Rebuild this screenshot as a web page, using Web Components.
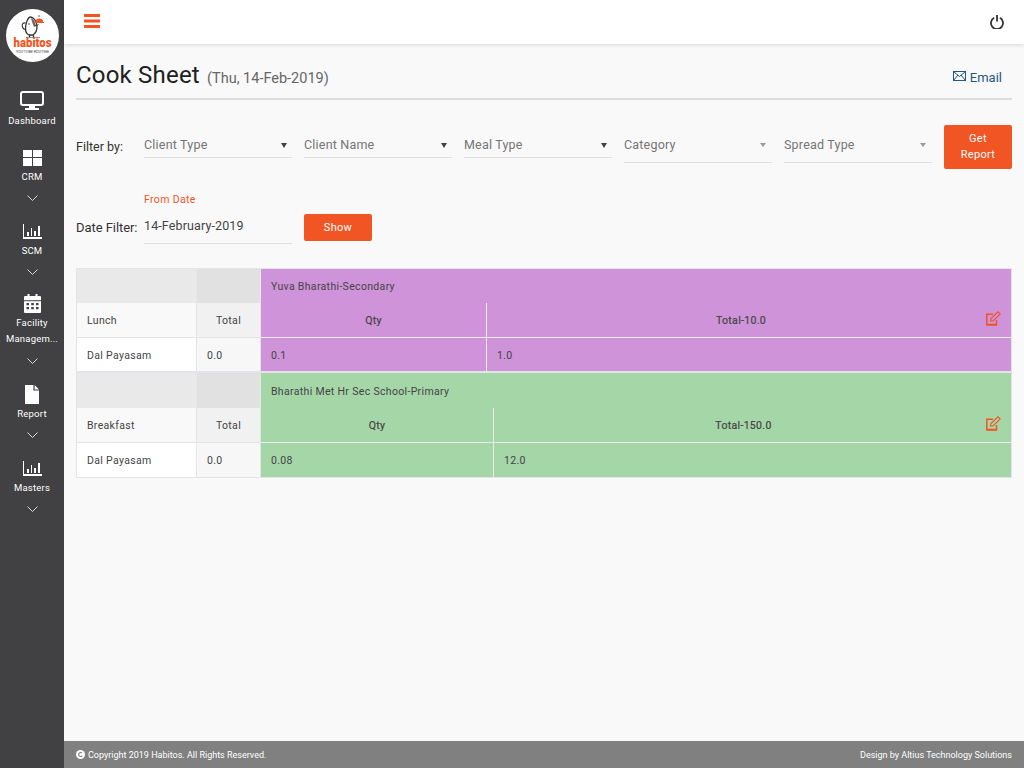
<!DOCTYPE html>
<html><head><meta charset="utf-8"><style>
html,body{margin:0;padding:0;height:100%}
body{font-family:Roboto,"Liberation Sans",sans-serif;background:#f9f9f9;color:#333}
app-shell{height:768px}
</style></head><body>
<app-shell>
<side-bar slot="side">
  <nav-item label="Dashboard" icon="monitor" top="28" gap="3"></nav-item>
  <nav-item label="CRM" icon="grid" more top="17" gap="3.25"></nav-item>
  <nav-item label="SCM" icon="chart" more top="18.25" gap="4.25"></nav-item>
  <nav-item label="Facility Managem..." icon="cal" more top="18.25" gap="2.25" chev="11.25"></nav-item>
  <nav-item label="Report" icon="file" more top="20.25" gap="2.25"></nav-item>
  <nav-item label="Masters" icon="chart" more top="18.25" gap="4.25"></nav-item>
</side-bar>
<top-bar slot="top"></top-bar>
<page-head></page-head>
<filter-row></filter-row>
<date-row></date-row>
<cook-group class="first" name="Yuva Bharathi-Secondary" color="#ce93d8" meal="Lunch" qtyw="226" pad="26" total="Total-10.0" item="Dal Payasam" qty="0.1" val="1.0"></cook-group>
<cook-group name="Bharathi Met Hr Sec School-Primary" color="#a5d6a7" meal="Breakfast" qtyw="233" pad="28" total="Total-150.0" item="Dal Payasam" qty="0.08" val="12.0"></cook-group>
</app-shell>
<script>
function def(name,html){
  customElements.define(name,class extends HTMLElement{
    connectedCallback(){
      if(this.shadowRoot)return;
      const r=this.attachShadow({mode:'open'});
      r.innerHTML=typeof html==='function'?html(this):html;
    }
  });
}
const icons={
monitor:`<svg width="24" height="19" viewBox="0 0 24 19" fill="none"><rect x="1" y="1" width="22" height="13" rx="2" stroke="#fff" stroke-width="2"/><rect x="9" y="14.500" width="6" height="2.500" fill="#fff"/><rect x="5" y="17" width="14" height="2" rx=".5" fill="#fff"/></svg>`,
grid:`<svg width="19" height="16" viewBox="0 0 19 16" fill="#fff"><rect width="9" height="7"/><rect x="10" width="9" height="7"/><rect y="8" width="9" height="8"/><rect x="10" y="8" width="9" height="8"/></svg>`,
chart:`<svg width="19" height="15" viewBox="0 0 19 15" fill="#fff"><rect x="0" y="0" width="1" height="15"/><rect x="0" y="13" width="19" height="2"/><rect x="4" y="8" width="2" height="4"/><rect x="8" y="4" width="1" height="8"/><rect x="11" y="7" width="2" height="5"/><rect x="15" y="2" width="2" height="10"/></svg>`,
cal:`<svg width="17" height="19" viewBox="0 0 17 19" fill="#fff"><path d="M3.500 0h2v2.500h-2zM11.500 0h2v2.500h-2z"/><path fill-rule="evenodd" d="M1 2h15a1 1 0 0 1 1 1v3.200H0V3a1 1 0 0 1 1-1zM0 7.200h17V18a1 1 0 0 1-1 1H1a1 1 0 0 1-1-1zM2.500 9v2.200H5V9zm4.700 0v2.200h2.600V9zm4.800 0v2.200h2.500V9zM2.500 13v2.200H5V13zm4.700 0v2.200h2.600V13zm4.800 0v2.200h2.500V13z"/></svg>`,
file:`<svg width="14" height="19" viewBox="0 0 14 19" fill="#fff"><path d="M0 0h8.400v5.400H14V19H0z"/><path d="M9.600 0L14 4.400H9.600z"/></svg>`};
const chev=`<svg width="11" height="6" viewBox="0 0 11 6" fill="none" stroke="#d8d8d8" stroke-width="1"><path d="M.5.500 5.500 5.500 10.500.500"/></svg>`;

def('app-shell',`<style>
:host{display:grid;grid-template-columns:64px 1fr;grid-template-rows:44px 1fr 27px;width:1024px;height:768px;overflow:hidden}
.side{grid-row:1/4;display:block}
.top{grid-column:2;position:relative;z-index:1}
main{grid-column:2;padding:0 12px;min-height:0;display:flex;flex-direction:column}
footer{grid-column:2;background:#808080;color:#fff;font-size:9px;display:flex;justify-content:space-between;align-items:center;padding:0 12px}
footer span{display:flex;align-items:center;gap:3px}
</style>
<div class="side"><slot name="side"></slot></div>
<div class="top"><slot name="top"></slot></div>
<main><slot></slot></main>
<footer><span><svg width="9" height="9" viewBox="0 0 10 10"><circle cx="5" cy="5" r="5" fill="#fff"/><path d="M6.800 3.600A2.200 2.200 0 1 0 6.800 6.400" fill="none" stroke="#808080" stroke-width="1.300"/></svg>Copyright 2019 Habitos. All Rights Reserved.</span><span>Design by Altius Technology Solutions</span></footer>`);

def('side-bar',`<style>
:host{display:flex;flex-direction:column;align-items:center;background:#414042;width:64px;height:768px}
.logo{width:53px;height:53px;border-radius:50%;background:#fff;margin-top:9px;display:block;flex:none}
.list{display:flex;flex-direction:column;width:100%;align-items:center}
text{font-family:Roboto,"Liberation Sans",sans-serif}
</style>
<svg class="logo" viewBox="0 0 53 53">
<path d="M24.500 8c2.500 0 6 3.500 6.500 9 .3 4-1.500 8-4.500 9h-3.500c-2.700-1-4-4.500-3.300-9 .4-3.500 2.300-9 4.800-9z" fill="#fff" stroke="#333" stroke-width="1.300"/>
<path d="M25 9c2.500 1 4.500 4.500 5 8l-2 1c-1-3-2.500-6-3-9z" fill="#666"/>
<circle cx="23" cy="15" r=".8" fill="#333"/>
<path d="M19.500 14c-2.500-.6-3.800 1-3.200 3.500s2.700 3.500 3.700 2.500" fill="none" stroke="#333" stroke-width="1.100"/>
<path d="M29 16.500c1.500.5 2.800 0 3.500-1.500" fill="none" stroke="#333" stroke-width=".8"/>
<path d="M23.500 26v2.300M27.500 26v2.300" stroke="#333" stroke-width="1.300"/>
<path d="M20 28.500h14" stroke="#666" stroke-width=".7"/>
<path d="M29.500 13a3.800 3.600 0 0 1 7.600 0z" fill="#f15524"/><path d="M28.500 13.500h9.500" stroke="#f15524" stroke-width="1"/><circle cx="33" cy="7" r="1" fill="#999"/>
<text x="26.500" y="38.200" text-anchor="middle" font-size="12" font-weight="900" fill="#f15524" textLength="38" lengthAdjust="spacingAndGlyphs">habitos</text>
<text x="26.500" y="44" text-anchor="middle" font-size="3.200" fill="#444" textLength="33" lengthAdjust="spacingAndGlyphs">YOU'TUBE ROUTINE</text>
</svg>
<div class="list"><slot></slot></div>`);

def('nav-item',h=>{
 const l=h.getAttribute('label'),more=h.hasAttribute('more'),ic=h.getAttribute('icon');
 const two=l.includes(' ');
 return `<style>
:host{display:flex;flex-direction:column;align-items:center;width:64px;color:#fff;font-size:9.500px;letter-spacing:.2px;text-align:center;margin-top:${h.getAttribute('top')}px}
.i{height:20px;display:flex;align-items:flex-end;justify-content:center}
.t{margin-top:${h.getAttribute('gap')}px;line-height:15.500px;white-space:pre-line}
.c{height:6px;margin-top:${h.getAttribute('chev')||'10.25'}px;display:flex}
</style><div class="i">${icons[ic]}</div><div class="t">${two?l.replace(' ','\n'):l}</div>${more?`<div class="c">${chev}</div>`:''}`;
});

def('top-bar',`<style>
:host{display:flex;justify-content:space-between;align-items:flex-start;height:44px;background:#fff;box-shadow:0 1px 4px rgba(0,0,0,.14);box-sizing:border-box;padding:14px 20px 0 20px}
</style>
<svg width="16" height="14" viewBox="0 0 16 14" fill="#f15524"><rect width="16" height="3"/><rect y="5.500" width="16" height="3"/><rect y="11" width="16" height="3"/></svg>
<svg width="14" height="14" viewBox="0 0 14 14" fill="none" stroke="#333" stroke-width="1.800" style="margin-top:1px"><path d="M4.100 2.800a6 6 0 1 0 5.800 0"/><path d="M7 0v6.500"/></svg>`);

def('page-head',`<style>
:host{display:flex;justify-content:space-between;align-items:flex-end;height:56px;box-sizing:border-box;border-bottom:2px solid #ddd;padding:0 10px 0 0;flex:none}
h1{margin:0 0 4px;font-size:24px;font-weight:400;color:#212121;line-height:30px;letter-spacing:.2px;white-space:nowrap}
small{font-size:14.500px;color:#666;margin-left:1px;font-weight:400;letter-spacing:0}
a{font-size:13px;color:#1f5785;display:flex;align-items:center;gap:4px;margin-bottom:13px;line-height:15px}
</style>
<h1>Cook Sheet <small>(Thu, 14-Feb-2019)</small></h1>
<a><svg width="13" height="10" viewBox="0 0 13 10" fill="none" stroke="#1f5785" stroke-width="1" style="margin-top:-3px"><rect x=".5" y=".5" width="12" height="9"/><path d="M.5.5 6.500 5.500 12.500.5M.5 9.500l4.500-5.500M12.500 9.500 8 4"/></svg>Email</a>`);

def('filter-select',h=>{
 const m=h.hasAttribute('muted');
 return `<style>
:host{display:block;width:148px;box-sizing:border-box;height:${m?38:33}px;border-bottom:1.500px solid #e0e0e0;position:relative;color:#757575;font-size:12.500px;letter-spacing:.2px;line-height:16px}
.a{position:absolute;right:${m?'6px':'5px'};top:18px;width:0;height:0;border-left:3.500px solid transparent;border-right:3.500px solid transparent;border-top:${m?'4px solid #999':'5.500px solid #444'}}
span{position:absolute;left:0;top:12px}
</style><span>${h.getAttribute('label')}</span><i class="a"></i>`;
});

def('filter-row',`<style>
:host{display:flex;gap:12px;height:44px;margin-top:25px;align-items:flex-start;flex:none;position:relative}
.l{width:56px;font-size:12.500px;color:#333;padding-top:14px;line-height:15px;white-space:nowrap}
button{width:68px;height:44px;background:#f15524;color:#fff;border:0;border-radius:2px;font:400 11px/16px Roboto,sans-serif;letter-spacing:.3px;padding:0 12px}
</style>
<div class="l">Filter by:</div>
<filter-select label="Client Type"></filter-select>
<filter-select label="Client Name"></filter-select>
<filter-select label="Meal Type"></filter-select>
<filter-select muted label="Category"></filter-select>
<filter-select muted label="Spread Type"></filter-select>
<button>Get Report</button>`);

def('date-row',`<style>
:host{display:flex;gap:12px;margin-top:24px;height:51px;align-items:flex-start;flex:none}
.l{width:56px;font-size:13px;color:#333;padding-top:27px;line-height:15px;white-space:nowrap;letter-spacing:-.06px}
.f{width:148px;height:51px;box-sizing:border-box;border-bottom:1.500px solid #e0e0e0;display:flex;flex-direction:column}
.f b{font-weight:400;font-size:10.500px;color:#f15524;line-height:13px;letter-spacing:.35px}
.f span{font-size:12.500px;color:#444;margin-top:12px;line-height:16px;letter-spacing:.12px}
button{margin-top:21px;width:68px;height:27px;background:#f15524;color:#fff;border:0;border-radius:2px;font:400 11px Roboto,sans-serif;letter-spacing:.3px;padding:0}
</style>
<div class="l">Date Filter:</div>
<div class="f"><b>From Date</b><span>14-February-2019</span></div>
<button>Show</button>`);

def('cook-group',h=>{
 const a=n=>h.getAttribute(n);
 const first=h.classList.contains('first');
 const bt=first?'border-top:1px solid #e2e4e8;':'border-top:1px solid transparent;';
 return `<style>
:host{display:grid;grid-template-columns:121px 64px ${+a('qtyw')}px 1fr;grid-template-rows:35px 35px 35px;width:936px;box-sizing:border-box;font-size:10.500px;letter-spacing:.33px;color:#444;flex:none;${first?'margin-top:24px;':''}}
div{box-sizing:border-box;display:flex;align-items:center;padding:0 10px;border-right:1px solid #e2e4e8;border-bottom:1px solid #e2e4e8;white-space:nowrap}
.c1{border-left:1px solid #e2e4e8}
.e1{background:#e9e9e9;${bt}border-bottom:0;border-right:1px solid #e6e6e6}
.e2{background:#e1e1e1;${bt}border-bottom:0;border-right:1px solid #e8e8e8}
.m{background:#f9f9f9}
.t{background:#f1f1f1;justify-content:center}
.w{background:#fff}
.v{background:#f7f7f7}
.k{background:${a('color')};border-right:0;border-bottom:0}
.n{grid-column:3/5;${bt}border-right:1px solid #e2e4e8}
.q,.tt{justify-content:center;-webkit-text-stroke:.2px #444;border-bottom:1px solid #ececec}
.q{border-right:1px solid #ececec}
.tt{border-right:1px solid #e2e4e8;position:relative;padding-right:${a('pad')}px}
.r{border-right:1px solid #ececec}
.l{border-right:1px solid #e2e4e8}
.last{border-bottom:${first?'2px':'1px'} solid #e2e4e8;${first?'padding-top:1px;':''}}
svg{position:absolute;right:10px;top:7.500px}
</style>
<div class="c1 e1"></div><div class="e2"></div><div class="k n">${a('name')}</div>
<div class="c1 m">${a('meal')}</div><div class="t">Total</div><div class="k q">Qty</div>
<div class="k tt">${a('total')}<svg width="15" height="15" viewBox="0 0 15 15" fill="none" stroke="#f15524"><path d="M10.500 9V13.500H.8V3.200H7" stroke-width="1.500"/><path d="M.5 14h10.500" stroke-width="1.500"/><path d="M4.500 10 5 7.500 12 .8 14.300 3 7 10z" stroke-width="1.100"/></svg></div>
<div class="c1 w last">${a('item')}</div><div class="v last">0.0</div><div class="k r last">${a('qty')}</div><div class="k l last">${a('val')}</div>`;
});
</script>
</body></html>
